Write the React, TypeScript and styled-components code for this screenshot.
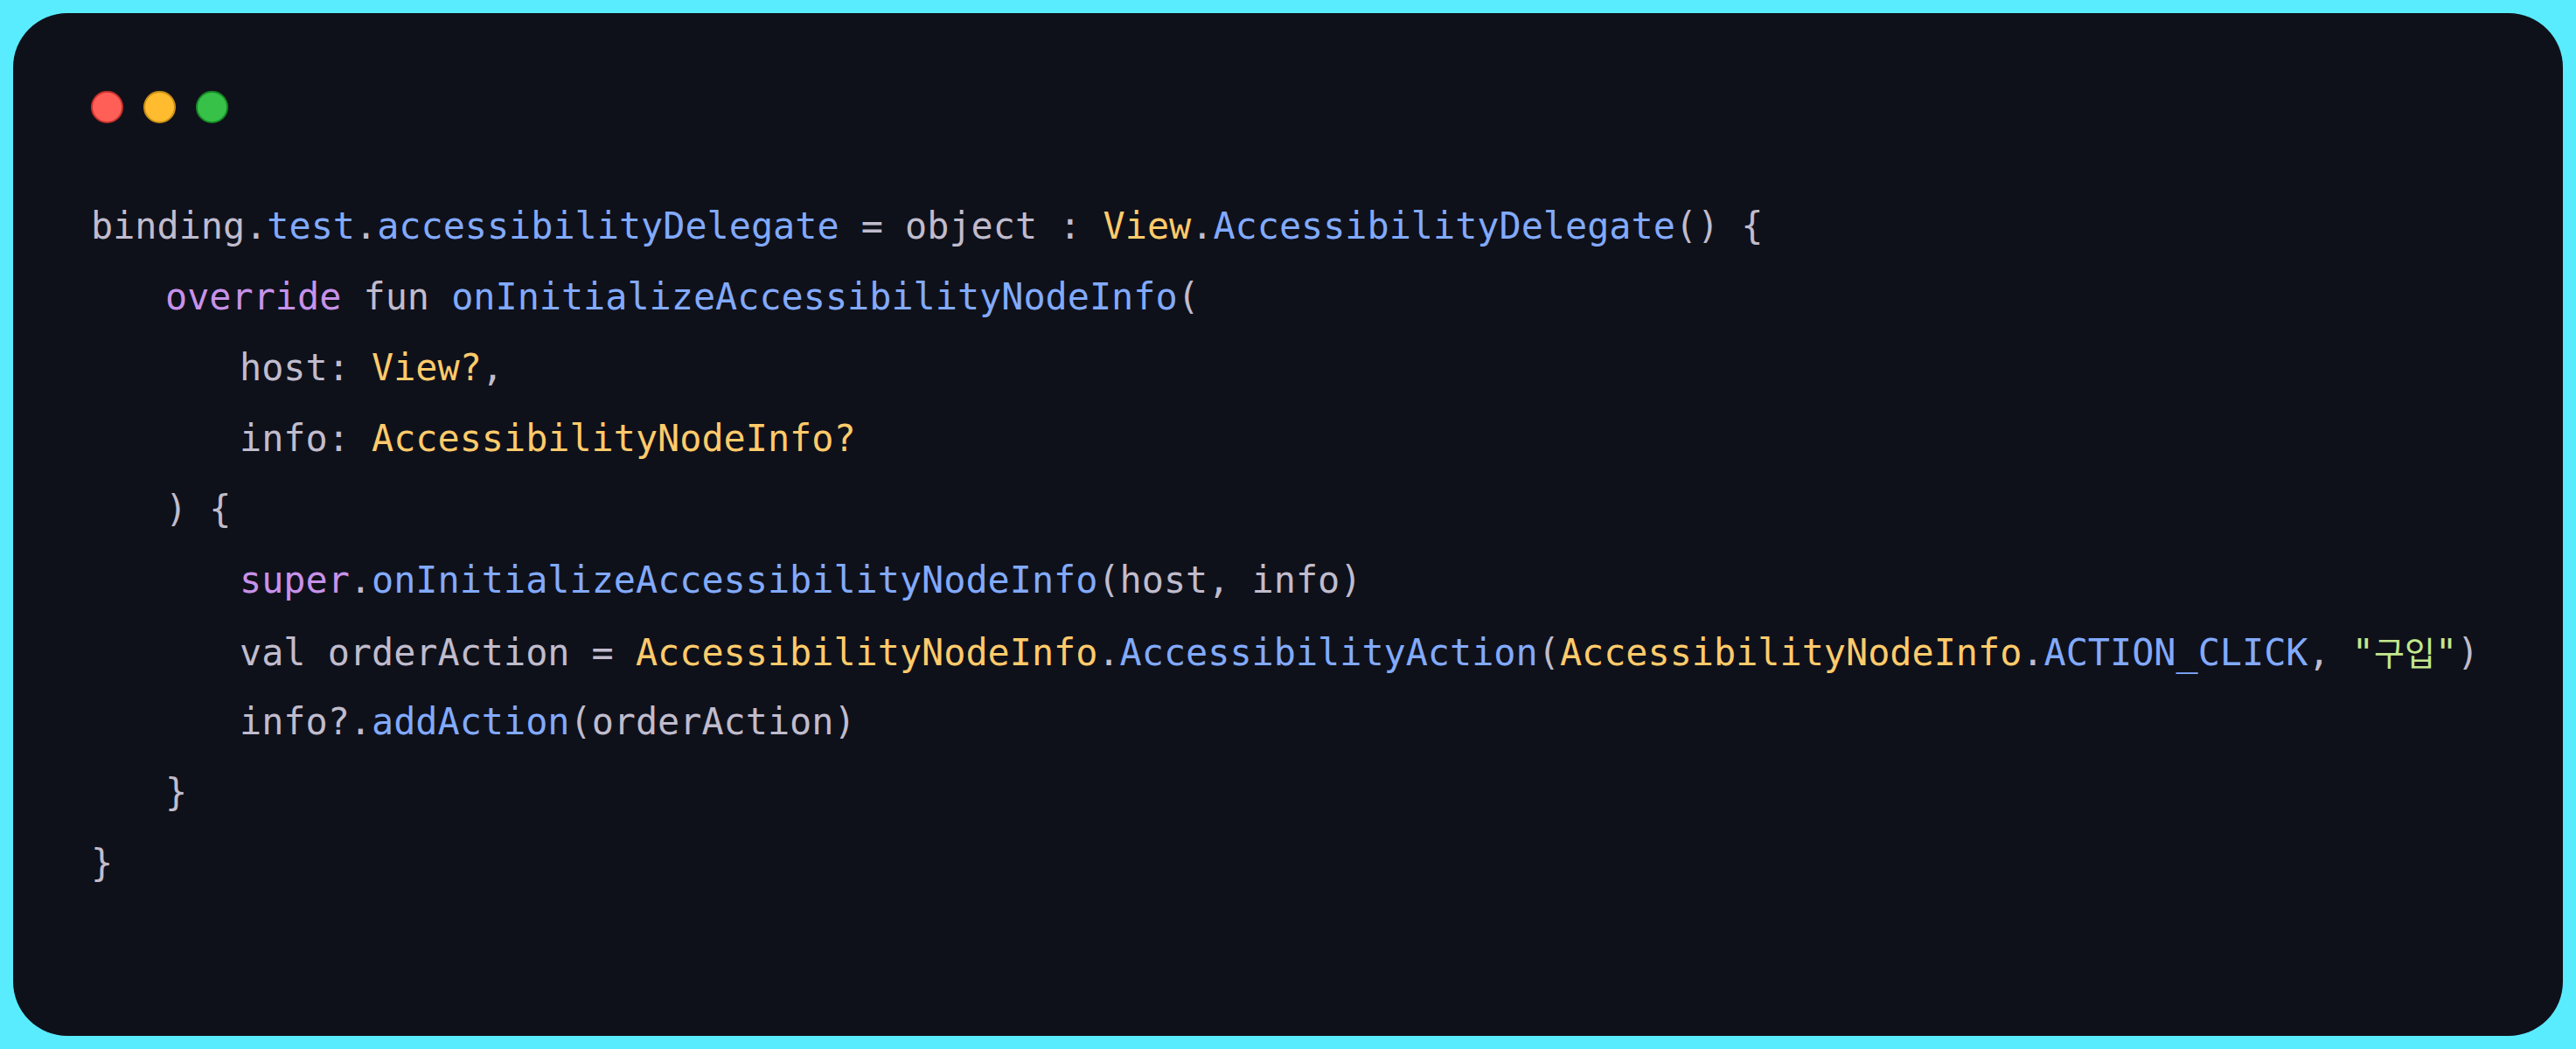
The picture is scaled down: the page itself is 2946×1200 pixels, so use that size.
import React from "react";
import styled, { createGlobalStyle } from "styled-components";

const GlobalStyle = createGlobalStyle`
  html, body {
    margin: 0;
    padding: 0;
    background: #59ecff;
  }
  body {
    padding: 15px;
    box-sizing: border-box;
    width: 2946px;
    height: 1200px;
  }
  * { box-sizing: border-box; }
`;

const Window = styled.div`
  height: 1170px;
  width: 100%;
  background: #0f111a;
  border-radius: 62px;
  padding: 89px 89px 0 89px;
  display: flex;
  flex-direction: column;
`;

const Controls = styled.div`
  display: flex;
  gap: 23px;
`;

const dotColors: Record<string, [string, string]> = {
  red: ["#ff5f57", "#c9322b"],
  yellow: ["#febc2e", "#c98f17"],
  green: ["#38c149", "#178a26"],
};

const Dot = styled.span<{ $tone: "red" | "yellow" | "green" }>`
  width: 37px;
  height: 37px;
  border-radius: 50%;
  background: ${(p) => dotColors[p.$tone][0]};
  border: 2px solid ${(p) => dotColors[p.$tone][1]};
`;

const Code = styled.div`
  margin-top: 77px;
  font-family: "DejaVu Sans Mono", "Noto Sans CJK KR", monospace;
  font-size: 41.8px;
  line-height: 81px;
  color: #c0bccd;
  white-space: pre;
`;

const Line = styled.div<{ $indent: number }>`
  padding-left: ${(p) => p.$indent * 85}px;
  height: 81px;
`;

const tokenColors = {
  fg: "#c0bccd",
  blue: "#82aaff",
  yellow: "#ffcb6b",
  purple: "#c792ea",
  green: "#c3e88d",
};

type Tone = keyof typeof tokenColors;

const Tok = styled.span<{ $c: Tone }>`
  color: ${(p) => tokenColors[p.$c]};
`;

const Hangul = styled.span`
  font-family: "Noto Sans CJK KR", sans-serif;
  font-size: 38px;
`;

type Seg = [Tone, React.ReactNode];

const lines: { indent: number; segs: Seg[] }[] = [
  {
    indent: 0,
    segs: [
      ["fg", "binding."],
      ["blue", "test"],
      ["fg", "."],
      ["blue", "accessibilityDelegate"],
      ["fg", " = object : "],
      ["yellow", "View"],
      ["fg", "."],
      ["blue", "AccessibilityDelegate"],
      ["fg", "() {"],
    ],
  },
  {
    indent: 1,
    segs: [
      ["purple", "override"],
      ["fg", " fun "],
      ["blue", "onInitializeAccessibilityNodeInfo"],
      ["fg", "("],
    ],
  },
  { indent: 2, segs: [["fg", "host: "], ["yellow", "View?"], ["fg", ","]] },
  { indent: 2, segs: [["fg", "info: "], ["yellow", "AccessibilityNodeInfo?"]] },
  { indent: 1, segs: [["fg", ") {"]] },
  {
    indent: 2,
    segs: [
      ["purple", "super"],
      ["fg", "."],
      ["blue", "onInitializeAccessibilityNodeInfo"],
      ["fg", "(host, info)"],
    ],
  },
  {
    indent: 2,
    segs: [
      ["fg", "val orderAction = "],
      ["yellow", "AccessibilityNodeInfo"],
      ["fg", "."],
      ["blue", "AccessibilityAction"],
      ["fg", "("],
      ["yellow", "AccessibilityNodeInfo"],
      ["fg", "."],
      ["blue", "ACTION_CLICK"],
      ["fg", ", "],
      [
        "green",
        <>
          "<Hangul>구입</Hangul>"
        </>,
      ],
      ["fg", ")"],
    ],
  },
  {
    indent: 2,
    segs: [["fg", "info?."], ["blue", "addAction"], ["fg", "(orderAction)"]],
  },
  { indent: 1, segs: [["fg", "}"]] },
  { indent: 0, segs: [["fg", "}"]] },
];

export default function App() {
  return (
    <>
      <GlobalStyle />
      <Window>
        <Controls>
          <Dot $tone="red" />
          <Dot $tone="yellow" />
          <Dot $tone="green" />
        </Controls>
        <Code>
          {lines.map((l, i) => (
            <Line key={i} $indent={l.indent}>
              {l.segs.map(([c, t], j) => (
                <Tok key={j} $c={c}>
                  {t}
                </Tok>
              ))}
            </Line>
          ))}
        </Code>
      </Window>
    </>
  );
}
